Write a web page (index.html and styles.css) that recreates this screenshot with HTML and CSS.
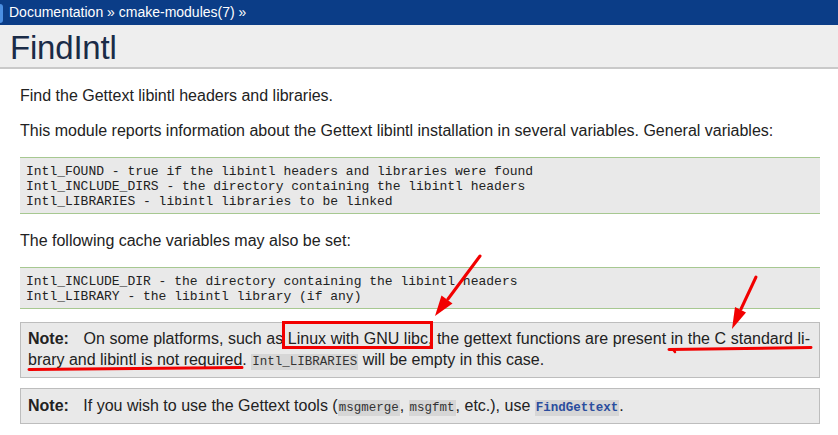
FILE: index.html
```html
<!DOCTYPE html>
<html>
<head>
<meta charset="utf-8">
<title>FindIntl</title>
<link rel="stylesheet" href="styles.css">
</head>
<body>
<div class="page">
  <div class="topbar">
    <span class="logo-edge"></span>
    <span class="crumbs">Documentation » cmake-modules(7) »</span>
  </div>
  <div class="header">
    <h1 class="title">FindIntl</h1>
  </div>
  <div class="content">
    <p class="p1">Find the Gettext libintl headers and libraries.</p>
    <p class="p2">This module reports information about the Gettext libintl installation in several variables. General variables:</p>
    <pre class="code code1">Intl_FOUND - true if the libintl headers and libraries were found
Intl_INCLUDE_DIRS - the directory containing the libintl headers
Intl_LIBRARIES - libintl libraries to be linked</pre>
    <p class="p3">The following cache variables may also be set:</p>
    <pre class="code code2">Intl_INCLUDE_DIR - the directory containing the libintl headers
Intl_LIBRARY - the libintl library (if any)</pre>
    <div class="note note1">
      <span class="line justified"><b class="note-title">Note:</b> On some platforms, such as Linux with GNU libc, the gettext functions are present in the C standard li-</span>
      <span class="line">brary and libintl is not required. <code class="lit">Intl_LIBRARIES</code> will be empty in this case.</span>
    </div>
    <div class="note note2">
      <span class="line"><b class="note-title">Note:</b> If you wish to use the Gettext tools (<code class="lit">msgmerge</code>, <code class="lit">msgfmt</code>, etc.), use <code class="lit ref">FindGettext</code>.</span>
    </div>
  </div>
  <svg class="marks" width="838" height="435" viewBox="0 0 838 435">
    <g fill="none" stroke="#f20000" stroke-width="3" stroke-linecap="round">
      <rect x="283.5" y="322.5" width="148" height="25"/>
      <line x1="480" y1="256" x2="448" y2="299"/>
      <line x1="756" y1="277" x2="741" y2="309"/>
      <path d="M29 369.5 L242 367.5"/>
      <path d="M669 349.5 L811 347.5"/>
      <path d="M673 349.5 L675 352" stroke-width="2.5"/>
    </g>
    <g fill="#f20000">
      <polygon points="435,316 452.5,303.5 441.5,295.5"/>
      <polygon points="732,329 746,312.5 735,307"/>
    </g>
  </svg>
</div>
</body>
</html>
```

FILE: styles.css
```css
html, body {
  margin: 0;
  padding: 0;
  background: #ffffff;
}

.page {
  position: relative;
  width: 838px;
  height: 435px;
  overflow: hidden;
  font-family: "Liberation Sans", Arial, sans-serif;
  color: #222222;
}

.topbar {
  display: flex;
  align-items: center;
  height: 25px;
  background: #0b3d87;
  color: #ffffff;
  font-size: 14px;
}

.logo-edge {
  width: 3px;
  height: 19px;
  margin-top: 1px;
  background: #4b8fe2;
  border-radius: 0 3px 3px 0;
}

.crumbs {
  margin-left: 6px;
  margin-top: -2px;
}

.header {
  height: 42px;
  background: #eeeeee;
  border-bottom: 2px solid #c9c9c9;
  padding-left: 10px;
}

.title {
  margin: 0;
  font-family: "Liberation Sans", Arial, sans-serif;
  font-weight: normal;
  font-size: 33px;
  line-height: 45px;
  color: #1a2b47;
  letter-spacing: -0.2px;
}

.content {
  padding: 0 18px 0 20px;
  font-size: 16px;
}

.content p {
  margin: 0;
  line-height: 20px;
}

.p1 { margin-top: 17px !important; }
.p2 { margin-top: 15px !important; }
.p3 { margin-top: 17px !important; }

.code {
  margin: 0;
  background: #e9e9e9;
  border-top: 1px solid #a7c891;
  border-bottom: 1px solid #a7c891;
  padding: 6px 6px 4px 6px;
  font-family: "Liberation Mono", "Courier New", monospace;
  font-size: 13px;
  line-height: 15px;
  color: #222222;
}

.code1 { margin-top: 16px; }
.code2 { margin-top: 16px; }

.note {
  background: #e9e9e9;
  border: 1px solid #bdbdbd;
  padding: 5px 9px 7px 7px;
  line-height: 21px;
  font-size: 16px;
}

.note1 { margin-top: 13px; }
.note2 { margin-top: 10px; padding-top: 6px; padding-bottom: 7px; }

.line {
  display: block;
}

.justified {
  text-align: justify;
  text-align-last: justify;
}

.note-title {
  font-weight: bold;
  margin-right: 10px;
}

.lit {
  font-family: "Liberation Mono", "Courier New", monospace;
  font-size: 12.5px;
  line-height: 1;
  background: #d6d6d6;
  color: #333333;
  padding: 1px 1px;
}

.ref {
  color: #2a4d9e;
  font-weight: bold;
}

.marks {
  position: absolute;
  left: 0;
  top: 0;
  pointer-events: none;
}
```
